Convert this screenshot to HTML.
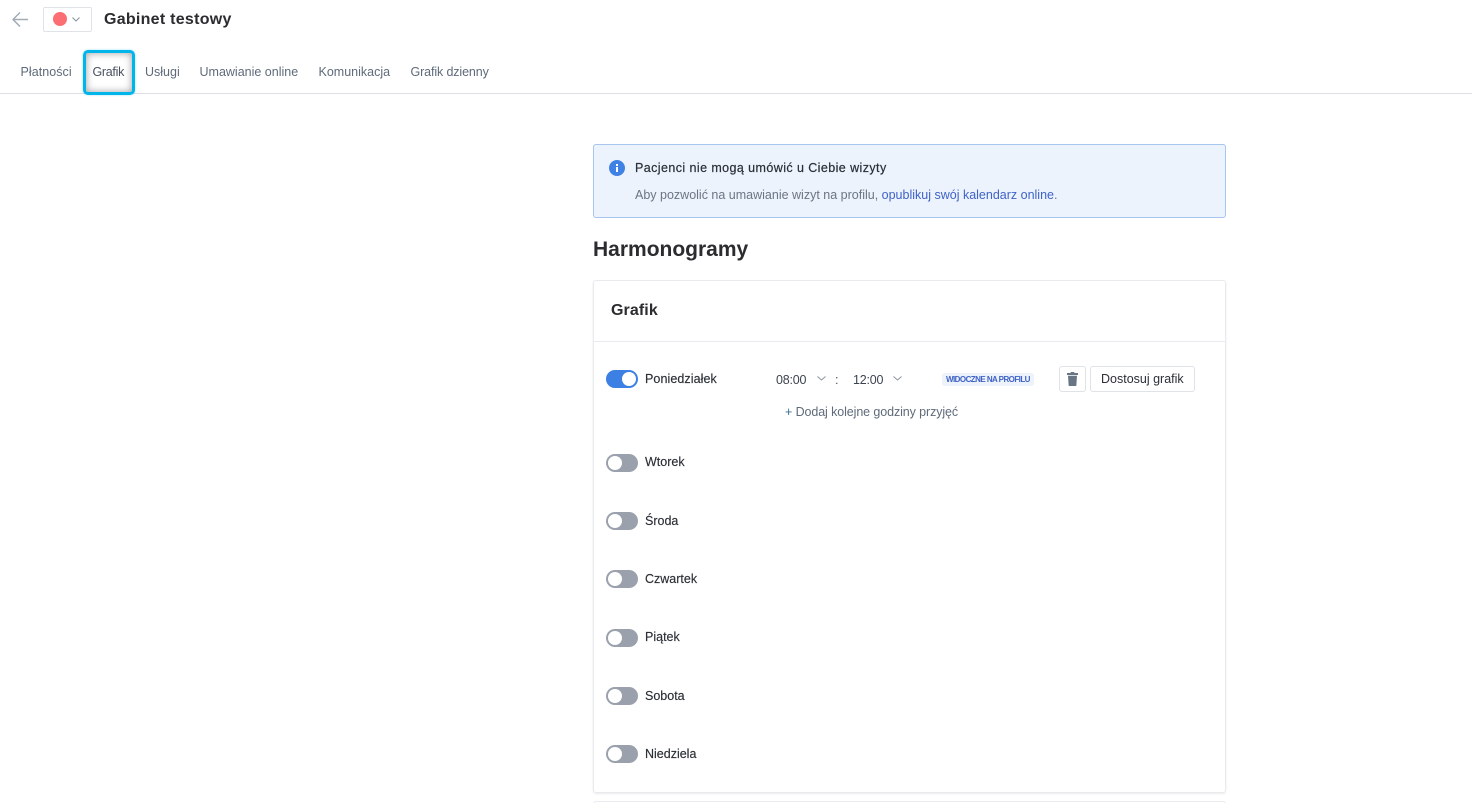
<!DOCTYPE html>
<html lang="pl">
<head>
<meta charset="utf-8">
<title>Gabinet testowy</title>
<style>
html,body{margin:0;padding:0;background:#fff;width:1472px;height:803px;overflow:hidden;}
body{font-family:"Liberation Sans",sans-serif;color:#2b2f36;}
#root{position:relative;width:1472px;height:803px;overflow:hidden;}
.t{position:absolute;white-space:nowrap;line-height:16px;font-size:12.5px;}
.nav{color:#5f6b7a;top:64px;}
.b{position:absolute;box-sizing:border-box;}
.tg{position:absolute;left:606px;width:32px;height:18px;border-radius:9px;background:#9aa1ac;}
.tg i{position:absolute;left:2px;top:2px;width:14px;height:14px;border-radius:50%;background:#fff;}
.tg.on{background:#3d80e4;}
.tg.on i{left:16px;}
.day{left:645px;font-size:12.5px;color:#2b2f36;-webkit-text-stroke:.15px #2b2f36;}
svg{position:absolute;overflow:visible;}
</style>
</head>
<body>
<div id="root">
<svg style="left:12px;top:12px" width="16" height="15" viewBox="0 0 16 15"><path d="M16 7.500H1M8 .5L1 7.500l7 7" fill="none" stroke="#a3abb5" stroke-width="1.500" stroke-linejoin="round"/></svg>
<div class="b" style="left:43px;top:7px;width:49px;height:25px;border:1px solid #dfe2e6;border-radius:2px;"></div>
<div class="b" style="left:53px;top:12px;width:14px;height:14px;border-radius:50%;background:#fb6e74;"></div>
<svg style="left:72px;top:17px" width="8" height="5" viewBox="0 0 8 5"><path d="M.5.5L4 4 7.500.5" fill="none" stroke="#8a94a0" stroke-width="1"/></svg>
<div class="t" style="left:104px;top:11px;font-size:16px;line-height:18px;font-weight:700;color:#2c2c30;letter-spacing:.27px;">Gabinet testowy</div>

<div class="t nav" style="left:20.500px;letter-spacing:.05px;">Płatności</div>
<div class="t nav" style="left:92.500px;color:#4a5260;letter-spacing:-.3px;">Grafik</div>
<div class="t nav" style="left:145px;">Usługi</div>
<div class="t nav" style="left:199.500px;">Umawianie online</div>
<div class="t nav" style="left:318.500px;">Komunikacja</div>
<div class="t nav" style="left:410.500px;letter-spacing:-.12px;">Grafik dzienny</div>
<div class="b" style="left:0;top:93px;width:1472px;height:1px;background:#dcdfe3;"></div>
<div class="b" style="left:83px;top:50px;width:52px;height:45px;border:3px solid #00b5ea;border-radius:5px;box-shadow:inset 0 0 8px rgba(0,0,0,.38),0 0 2px rgba(0,181,234,.4);"></div>

<div class="b" style="left:593px;top:144px;width:633px;height:74px;background:#ecf3fd;border:1px solid #a6c5ef;border-radius:3px;"></div>
<svg style="left:609px;top:160px" width="16" height="16" viewBox="0 0 16 16"><circle cx="8" cy="8" r="8" fill="#3f82e4"/><rect x="7" y="7" width="2" height="5" fill="#fff"/><rect x="7" y="4" width="2" height="2" fill="#fff"/></svg>
<div class="t" style="left:635px;top:160px;color:#2b2f36;-webkit-text-stroke:.2px #2b2f36;letter-spacing:.42px;">Pacjenci nie mogą umówić u Ciebie wizyty</div>
<div class="t" style="left:635px;top:187px;color:#6b7583;">Aby pozwolić na umawianie wizyt na profilu, <span style="color:#3f63c6;">opublikuj swój kalendarz online</span>.</div>

<div class="t" style="left:593px;top:238px;font-size:21px;line-height:24px;font-weight:700;color:#2c2c30;">Harmonogramy</div>

<div class="b" style="left:593px;top:280px;width:633px;height:513px;border:1px solid #e8eaed;border-radius:3px;box-shadow:0 1px 2px rgba(0,0,0,.08);"></div>
<div class="t" style="left:611px;top:302px;font-size:16px;line-height:18px;font-weight:700;color:#2c2c30;letter-spacing:.1px;">Grafik</div>
<div class="b" style="left:594px;top:341px;width:631px;height:1px;background:#e8eaed;"></div>

<div class="tg on" style="top:370px;"><i></i></div>
<div class="t day" style="top:371px;letter-spacing:.08px;">Poniedziałek</div>
<div class="t" style="left:776px;top:372px;color:#3c4450;letter-spacing:-.2px;">08:00</div>
<svg style="left:817px;top:376px" width="9" height="5" viewBox="0 0 9 5"><path d="M.5.5L4.500 4l4-3.500" fill="none" stroke="#8a94a0" stroke-width="1"/></svg>
<div class="t" style="left:835px;top:372px;color:#4a5260;">:</div>
<div class="t" style="left:853px;top:372px;color:#3c4450;letter-spacing:-.2px;">12:00</div>
<svg style="left:893px;top:376px" width="9" height="5" viewBox="0 0 9 5"><path d="M.5.5L4.500 4l4-3.500" fill="none" stroke="#8a94a0" stroke-width="1"/></svg>
<div class="b" style="left:942px;top:373px;width:92px;height:13px;background:#edf2fb;border-radius:3px;"></div>
<div class="t" style="left:946px;top:373px;font-size:8px;line-height:13px;font-weight:700;color:#3f63c6;letter-spacing:-.55px;">WIDOCZNE NA PROFILU</div>
<div class="b" style="left:1059px;top:366px;width:27px;height:26px;border:1px solid #dfe2e6;border-radius:3px;background:#fff;"></div>
<svg style="left:1067px;top:372px" width="11" height="14" viewBox="0 0 11 14"><path d="M4 0h3l.6 1H11v2H0V1h3.400zM1 3.800h9L9.300 14H1.700z" fill="#687584"/></svg>
<div class="b" style="left:1090px;top:366px;width:105px;height:26px;border:1px solid #dfe2e6;border-radius:3px;background:#fff;"></div>
<div class="t" style="left:1101px;top:371px;color:#2b2f36;">Dostosuj grafik</div>
<div class="t" style="left:785px;top:404px;color:#5f6b7a;letter-spacing:-.1px;"><span style="color:#3a6f8f;">+</span> Dodaj kolejne godziny przyjęć</div>

<div class="tg" style="top:454px;"><i></i></div><div class="t day" style="top:454px;">Wtorek</div>
<div class="tg" style="top:512px;"><i></i></div><div class="t day" style="top:513px;">Środa</div>
<div class="tg" style="top:570px;"><i></i></div><div class="t day" style="top:571px;">Czwartek</div>
<div class="tg" style="top:629px;"><i></i></div><div class="t day" style="top:629px;">Piątek</div>
<div class="tg" style="top:687px;"><i></i></div><div class="t day" style="top:688px;">Sobota</div>
<div class="tg" style="top:745px;"><i></i></div><div class="t day" style="top:746px;">Niedziela</div>

<div class="b" style="left:593px;top:801px;width:633px;height:10px;border:1px solid #e8eaed;border-radius:3px;"></div>
</div>
</body>
</html>
